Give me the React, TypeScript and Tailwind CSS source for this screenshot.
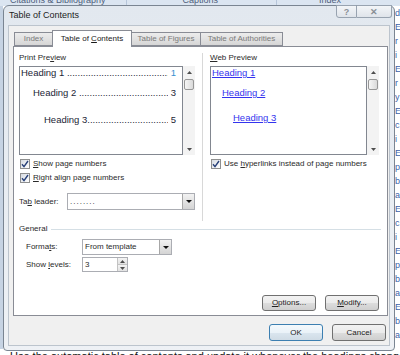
import React from 'react';

const Up = () => (
  <svg width="5" height="3" viewBox="0 0 5 3"><path d="M0 3 L2.5 0 L5 3 Z" fill="#4d4d4d" /></svg>
);
const Down = () => (
  <svg width="5" height="3" viewBox="0 0 5 3"><path d="M0 0 L5 0 L2.5 3 Z" fill="#4d4d4d" /></svg>
);
const Caret = () => (
  <svg width="6" height="3" viewBox="0 0 6 3"><path d="M0 0 L6 0 L3 3 Z" fill="#111" /></svg>
);

const ScrollBar = () => (
  <div className="w-[12px] h-full bg-[#f3f3f3] flex flex-col items-center">
    <div className="h-[12px] flex items-center justify-center"><Up /></div>
    <div className="mt-px w-[10px] h-[11px] rounded-[2px] border border-[#979797] bg-[linear-gradient(90deg,#f6f6f6,#dadada)]" />
    <div className="flex-1" />
    <div className="h-[12px] flex items-center justify-center"><Down /></div>
  </div>
);

const Check = ({ children }: { children: React.ReactNode }) => (
  <div className="flex items-center h-[12px]">
    <span className="w-[10px] h-[10px] border border-[#8e8f8f] bg-[linear-gradient(135deg,#d6dbe2,#ffffff)] flex items-center justify-center">
      <svg width="8" height="8" viewBox="0 0 8 8">
        <path d="M1 4.2 L3 6.6 L7 1" stroke="#263f78" strokeWidth="1.4" fill="none" />
      </svg>
    </span>
    <span className="ml-[3px]">{children}</span>
  </div>
);

const Leader = ({ text, num, indent, gap, numColor }: { text: string; num: string; indent: string; gap: boolean; numColor?: string }) => (
  <div className={`flex h-[12px] items-center whitespace-nowrap ${indent}`}>
    <span>{text}{gap ? '\u00a0' : ''}</span>
    <span className="flex-1 min-w-0 overflow-hidden">{'.'.repeat(120)}</span>
    <span className={numColor}>{'\u00a0' + num}</span>
  </div>
);

const Btn = ({ children, focus }: { children: React.ReactNode; focus?: boolean }) => (
  <div
    className={`w-[54px] h-full rounded-[3px] border flex items-center justify-center text-[#222] ${
      focus
        ? 'border-[#3c7fb1] bg-[linear-gradient(#f4f9fc,#eaf2f8_50%,#dbe6ef_50%,#cfdbe5)]'
        : 'border-[#707070] bg-[linear-gradient(#f2f2f2,#ebebeb_50%,#dddddd_50%,#cfcfcf)]'
    }`}
  >
    {children}
  </div>
);

const DropBtn = () => (
  <div className="w-[12px] h-full border-l border-[#a7a7a7] bg-[linear-gradient(#f2f2f2,#d4d4d4)] flex items-center justify-center">
    <Caret />
  </div>
);

export default function App() {
  return (
    <div className="relative w-[400px] h-[355px] overflow-hidden bg-white font-['Liberation_Sans',Arial,sans-serif] text-[8px] leading-[10px] text-[#2a2a2a]">
      {/* Word window behind the dialog */}
      <div className="h-[6px] overflow-hidden bg-[#dbe5f1] flex text-[9px] text-[#4f5f7c]">
        <span className="ml-[10px] -mt-[5px]">Citations &amp; Bibliography</span>
        <span className="ml-[20px] w-px h-full bg-[#b7c6da]" />
        <span className="ml-[56px] -mt-[5px]">Captions</span>
        <span className="ml-[58px] w-px h-full bg-[#b7c6da]" />
        <span className="ml-[42px] -mt-[5px]">Index</span>
      </div>
      <div className="flex h-[343px]">
        <div className="w-[3px] bg-[#c6d3e3]" />
        <div className="flex-1" />
        <div className="w-[5px] flex flex-col overflow-hidden text-[9px] leading-[14px] text-[#3d62a8]">
          <span>d</span><span>E</span><span>r</span><span>i</span><span>E</span><span>r</span><span>y</span>
          <span>E</span><span>c</span><span>i</span><span>E</span><span>p</span><span>b</span><span>a</span>
          <span>E</span><span>c</span><span>i</span><span>E</span><span>p</span><span>b</span><span>a</span>
          <span>E</span><span>b</span><span>a</span>
        </div>
      </div>
      <div className="h-[6px] overflow-hidden pl-[10px] text-[11px] leading-[14px] whitespace-nowrap text-[#111]">
        Use the automatic table of contents and update it whenever the headings change in the document
      </div>

      {/* Dialog */}
      <div className="absolute left-[3px] top-[5px] w-[392px] h-[346px] rounded-t-[6px] rounded-b-[4px] border border-[#7a8592] bg-[linear-gradient(#e2e8ef,#eef1f5)] px-[4px] pb-[4px] flex flex-col">
        <div className="relative h-[19px] shrink-0 flex items-center pb-[2px] pl-px text-[9px] text-[#1c1c1c]">
          Table of Contents
          <div className="absolute right-[-2px] top-[-1px] flex h-[13px]">
            <div className="w-[21px] h-full border border-[#98a3b0] rounded-bl-[3px] bg-[linear-gradient(#f3f5f8,#dfe4ea)] flex items-center justify-center text-[9px] font-bold text-[#8a8f96]">?</div>
            <div className="w-[35px] h-full border border-l-0 border-[#98a3b0] rounded-br-[3px] bg-[linear-gradient(#f3f5f8,#dfe4ea)] flex items-center justify-center text-[9px] font-bold text-[#8a8f96]">✕</div>
          </div>
        </div>

        <div className="flex-1 bg-[#f0f0f0] border border-[#bcc4cd] flex flex-col">
          {/* tabs */}
          <div className="mt-[3px] ml-[5px] h-[17px] flex items-end relative z-10">
            <div className="w-[38px] h-[14px] border border-r-0 border-[#898c95] bg-[linear-gradient(#ececec,#d6d6d6)] flex items-center justify-center text-[#7a7a7a]">Index</div>
            <div className="w-[80px] h-[17px] -mb-px border border-b-0 border-[#898c95] bg-white flex items-center justify-center text-[#1a1a1a]">
              <span>Table of <u>C</u>ontents</span>
            </div>
            <div className="w-[69px] h-[14px] border border-l-0 border-[#898c95] bg-[linear-gradient(#ececec,#d6d6d6)] flex items-center justify-center text-[#7a7a7a]">Table of Figures</div>
            <div className="w-[82px] h-[14px] border border-l-0 border-[#898c95] bg-[linear-gradient(#ececec,#d6d6d6)] flex items-center justify-center text-[#7a7a7a]">Table of Authorities</div>
          </div>

          {/* panel */}
          <div className="ml-[4px] w-[375px] h-[270px] border border-[#898c95] bg-white pl-[5px] pr-[6px] pt-[6px] flex flex-col">
            <div className="flex h-[168px]">
              <div className="w-[176px] flex flex-col">
                <div className="h-[10px]">Print Pre<u>v</u>iew</div>
                <div className="mt-[3px] h-[89px] flex">
                  <div className="w-[164px] h-full border border-[#828790] pr-[6px] pl-px text-[9.5px] text-[#1c2536] font-['Liberation_Sans',Arial,sans-serif]">
                    <Leader text="Heading 1" num="1" indent="" gap numColor="text-[#3b8fd0]" />
                    <Leader text="Heading 2" num="3" indent="mt-[8px] pl-[12px]" gap />
                    <Leader text="Heading 3" num="5" indent="mt-[15px] pl-[23px]" gap={false} />
                  </div>
                  <ScrollBar />
                </div>
                <div className="mt-[3px] pl-px"><Check><u>S</u>how page numbers</Check></div>
                <div className="mt-[2px] pl-px"><Check><u>R</u>ight align page numbers</Check></div>
                <div className="mt-[9px] h-[17px] flex items-center">
                  <span className="w-[48px]">Ta<u>b</u> leader:</span>
                  <div className="flex-1 h-full border border-[#abadb3] bg-white flex">
                    <div className="flex-1 pl-[2px] flex items-center tracking-[1px]">........</div>
                    <DropBtn />
                  </div>
                </div>
              </div>
              <div className="ml-[7px] w-[2px] h-full border-l border-[#d8d8d8] bg-white" />
              <div className="ml-[6px] w-[170px] flex flex-col">
                <div className="h-[10px]"><u>W</u>eb Preview</div>
                <div className="mt-[3px] h-[89px] flex">
                  <div className="w-[157px] h-full border border-[#828790] pl-px text-[9.5px] text-[#3434ee]">
                    <div className="h-[12px] flex items-center"><span className="underline">Heading 1</span></div>
                    <div className="mt-[8px] h-[12px] pl-[10px] flex items-center"><span className="underline">Heading 2</span></div>
                    <div className="mt-[13px] h-[12px] pl-[21px] flex items-center"><span className="underline">Heading 3</span></div>
                  </div>
                  <ScrollBar />
                </div>
                <div className="mt-[3px] pl-px"><Check>Use <u>h</u>yperlinks instead of page numbers</Check></div>
              </div>
            </div>

            <div className="mt-[3px] h-[10px] flex items-center">
              <span>General</span>
              <span className="ml-[4px] flex-1 h-px bg-[#d5dfe5]" />
            </div>
            <div className="mt-[5px] h-[16px] flex items-center pl-[7px]">
              <span className="w-[56px]">Forma<u>t</u>s:</span>
              <div className="w-[90px] h-full border border-[#abadb3] bg-white flex">
                <div className="flex-1 pl-[2px] flex items-center">From template</div>
                <DropBtn />
              </div>
            </div>
            <div className="mt-[2px] h-[15px] flex items-center pl-[7px]">
              <span className="w-[56px]">Show <u>l</u>evels:</span>
              <div className="w-[46px] h-full border border-[#abadb3] bg-white flex">
                <div className="flex-1 pl-[2px] flex items-center">3</div>
                <div className="w-[10px] h-full border-l border-[#c3c3c3] flex flex-col">
                  <div className="flex-1 bg-[linear-gradient(#f4f4f4,#e2e2e2)] border-b border-[#c3c3c3] flex items-center justify-center"><Up /></div>
                  <div className="flex-1 bg-[linear-gradient(#f4f4f4,#e2e2e2)] flex items-center justify-center"><Down /></div>
                </div>
              </div>
            </div>
            <div className="mt-[23px] h-[16px] flex justify-end gap-[9px] mr-[2px]">
              <Btn><span><u>O</u>ptions...</span></Btn>
              <Btn><span><u>M</u>odify...</span></Btn>
            </div>
          </div>

          <div className="mt-[8px] h-[17px] flex justify-end gap-[9px] pr-[3px]">
            <Btn focus>OK</Btn>
            <Btn>Cancel</Btn>
          </div>
        </div>
      </div>
    </div>
  );
}
